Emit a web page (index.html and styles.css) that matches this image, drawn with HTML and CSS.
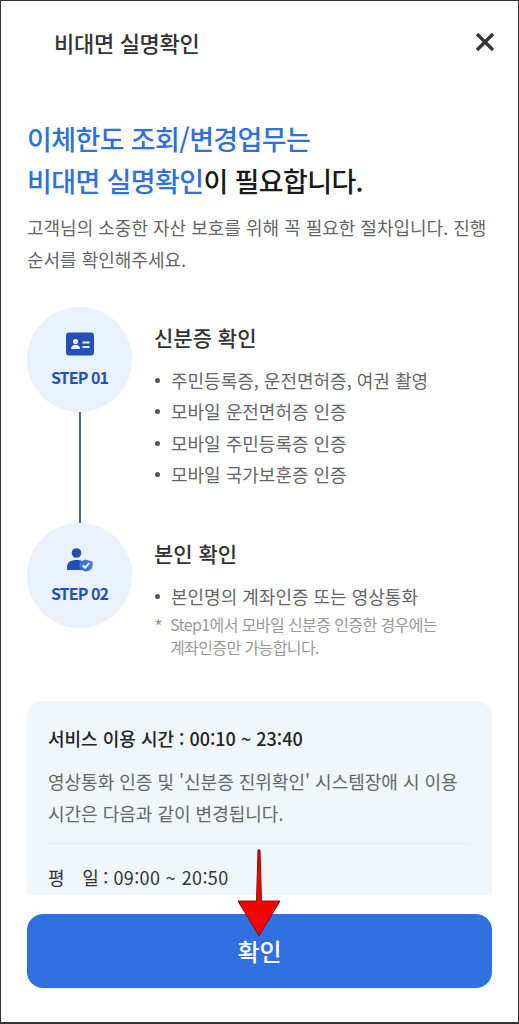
FILE: index.html
```html
<!DOCTYPE html>
<html lang="ko">

<head>
    <meta charset="UTF-8">
    <title>비대면 실명확인</title>
    <link rel="stylesheet" href="styles.css">
</head>

<body>
    <div class="screen">
        <div class="header">
            <h1 class="title">비대면 실명확인</h1>
            <svg class="close" width="20" height="20" viewBox="0 0 20 20">
                <path d="M2 2L18 18M18 2L2 18" stroke="#333" stroke-width="3.2" fill="none" />
            </svg>
        </div>

        <div class="content">
            <h2 class="headline"><span class="blue">이체한도 조회/변경업무는<br>비대면 실명확인</span>이 필요합니다.</h2>
            <p class="intro">고객님의 소중한 자산 보호를 위해 꼭 필요한 절차입니다. 진행 순서를 확인해주세요.</p>

            <div class="steps">
                <div class="step step1">
                    <div class="side">
                        <div class="circle">
                            <svg width="30" height="24" viewBox="0 0 30 24">
                                <rect width="28" height="23" x="1" y="0.5" rx="3" fill="#2450b4" />
                                <circle cx="10.5" cy="9.5" r="2.6" fill="#e8f1fc" />
                                <path d="M6 17c0-3 2-4.2 4.5-4.2s4.500 1.200 4.500 4.200z" fill="#e8f1fc" />
                                <path d="M17.500 10.500h7M17.500 15h7" stroke="#e8f1fc" stroke-width="2" />
                            </svg>
                            <span class="label">STEP 01</span>
                        </div>
                        <div class="line"></div>
                    </div>
                    <div class="info">
                        <h3 class="step-title">신분증 확인</h3>
                        <ul class="list">
                            <li>주민등록증, 운전면허증, 여권 촬영</li>
                            <li>모바일 운전면허증 인증</li>
                            <li>모바일 주민등록증 인증</li>
                            <li>모바일 국가보훈증 인증</li>
                        </ul>
                    </div>
                </div>

                <div class="step step2">
                    <div class="side">
                        <div class="circle">
                            <svg width="30" height="24" viewBox="0 0 30 24">
                                <circle cx="11.500" cy="5" r="4.800" fill="#2450b4" />
                                <path d="M2 22v-3c0-4.500 3.500-7 9.500-7 3 0 5 .6 7 2v8z" fill="#2450b4" />
                                <path d="M21 11.500l6.500 2.200v4c0 3.200-2.800 4.800-6.500 5.800-3.700-1-6.500-2.600-6.500-5.800v-4z" fill="#3d74d8" />
                                <path d="M17.800 17.300l2.400 2.300 4-4.400" stroke="#fff" stroke-width="1.900" fill="none" />
                            </svg>
                            <span class="label">STEP 02</span>
                        </div>
                    </div>
                    <div class="info">
                        <h3 class="step-title">본인 확인</h3>
                        <ul class="list">
                            <li>본인명의 계좌인증 또는 영상통화</li>
                        </ul>
                        <p class="note">Step1에서 모바일 신분증 인증한 경우에는 계좌인증만 가능합니다.</p>
                    </div>
                </div>
            </div>

            <div class="notice">
                <h4 class="notice-title">서비스 이용 시간 : 00:10 ~ 23:40</h4>
                <p class="notice-text">영상통화 인증 및 '신분증 진위확인' 시스템장애 시 이용 시간은 다음과 같이 변경됩니다.</p>
                <div class="notice-time"><span class="day">평&nbsp;&nbsp;&nbsp;&nbsp;일</span> : <span class="hours">09:00 ~ 20:50</span></div>
            </div>
        </div>

        <div class="footer">
            <button class="confirm">확인</button>
        </div>

        <!-- 빨간 화살표 -->
        <svg class="arrow" width="46" height="90" viewBox="0 0 46 90">
            <path d="M22 1L24 1L25.500 52L44 52L23 87L2 52L20.500 52z" fill="#f80000" stroke="#7a1010" stroke-width="1" />
        </svg>
    </div>
</body>

</html>
```

FILE: styles.css
```css
* {
    margin: 0;
    padding: 0;
    box-sizing: border-box;
}

body {
    font-family: "Noto Sans CJK KR", "Noto Sans", sans-serif;
    background: #fff;
}

.screen {
    width: 519px;
    height: 1024px;
    border: 1px solid #333;
    border-bottom-width: 2px;
    position: relative;
    display: flex;
    flex-direction: column;
    overflow: hidden;
    background: #fff;
}

.header {
    height: 82px;
    padding: 0 23px 0 53px;
    display: flex;
    align-items: center;
    justify-content: space-between;
    flex-shrink: 0;
}

.title {
    font-size: 22px;
    font-weight: 500;
    letter-spacing: -0.3px;
    color: #333;
}

.content {
    flex: 1;
    min-height: 0;
    overflow: hidden;
    padding: 35px 26px 0;
}

.headline {
    font-size: 27px;
    font-weight: 500;
    line-height: 42px;
    letter-spacing: -0.63px;
    color: #1a1a1a;
}

.blue {
    color: #3070da;
}

.intro {
    margin-top: 9px;
    font-size: 18px;
    line-height: 32px;
    color: #666;
}

.steps {
    margin-top: 32px;
}

.step {
    display: flex;
    gap: 22px;
}

.step1 {
    height: 216px;
}

.side {
    width: 105px;
    flex-shrink: 0;
    display: flex;
    flex-direction: column;
    align-items: center;
}

.circle {
    width: 105px;
    height: 105px;
    flex-shrink: 0;
    border-radius: 50%;
    background: #e8f1fc;
    display: flex;
    flex-direction: column;
    align-items: center;
    justify-content: center;
    gap: 11px;
}

.label {
    font-size: 16px;
    font-weight: 700;
    line-height: 20px;
    letter-spacing: -0.9px;
    color: #2450b4;
}

.line {
    flex: 1;
    width: 2px;
    margin-left: 1px;
    background: #4a68a8;
}

.info {
    padding-top: 14px;
}

.step-title {
    font-size: 21px;
    font-weight: 500;
    line-height: 32px;
    color: #333;
}

.list {
    list-style: none;
    margin-top: 12px;
}

.list li {
    font-size: 18px;
    line-height: 31.3px;
    color: #666;
    padding-left: 17px;
    position: relative;
}

.list li::before {
    content: "";
    position: absolute;
    left: 1px;
    top: 13px;
    width: 5px;
    height: 5px;
    border-radius: 50%;
    background: #555;
}

.note {
    margin-top: 1px;
    font-size: 16px;
    line-height: 23px;
    letter-spacing: -0.6px;
    word-break: keep-all;
    color: #999;
    padding-left: 16px;
    position: relative;
}

.note::before {
    content: "*";
    position: absolute;
    left: 0;
    top: 1px;
    font-size: 19px;
}

.notice {
    margin-top: 42px;
    height: 300px;
    padding: 22px 21px;
    border-radius: 16px;
    background: #f1f6fa;
}

.notice-title {
    font-size: 18px;
    font-weight: 500;
    line-height: 30px;
    color: #222;
}

.notice-text {
    margin-top: 12px;
    font-size: 18px;
    line-height: 32px;
    color: #666;
    padding-bottom: 14px;
    border-bottom: 1px solid #e8ecf0;
}

.notice-time {
    margin-top: 17px;
    font-size: 18px;
    line-height: 32px;
    color: #333;
}

.day {
    letter-spacing: -0.5px;
}

.hours {
    letter-spacing: 0.4px;
}

.footer {
    height: 127px;
    flex-shrink: 0;
    padding: 19px 26px 0;
    background: #fff;
}

.confirm {
    width: 465px;
    height: 74px;
    padding-bottom: 2px;
    border: 0;
    border-radius: 16px;
    background: #3070e0;
    font-family: inherit;
    font-size: 24px;
    font-weight: 500;
    color: #fff;
}

.arrow {
    position: absolute;
    left: 235px;
    top: 848px;
}
```
